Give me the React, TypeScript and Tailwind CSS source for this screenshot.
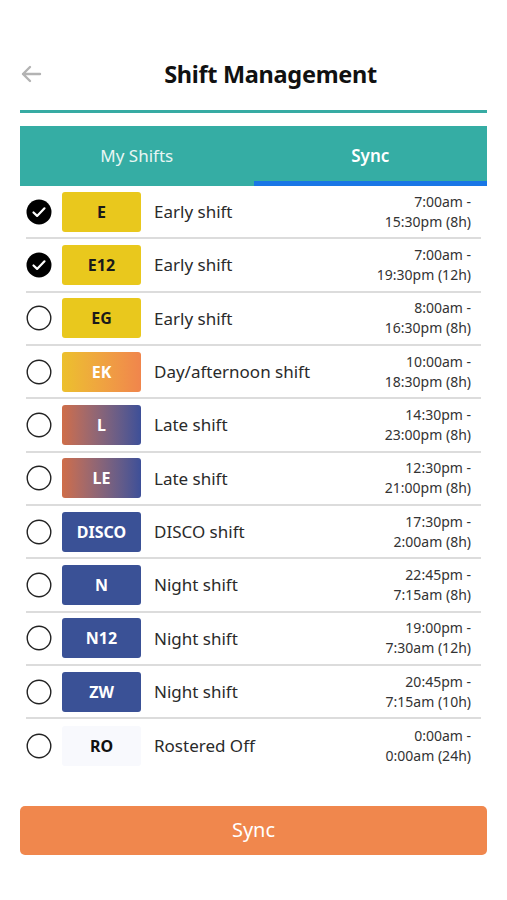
import React from 'react';

type Shift = {
  code: string;
  name: string;
  from: string;
  to: string;
  badge: string;
  text: string;
  checked?: boolean;
};

const shifts: Shift[] = [
  { code: 'E', name: 'Early shift', from: '7:00am -', to: '15:30pm (8h)', badge: 'bg-[#e9c81d]', text: 'text-[#1a1a1a]', checked: true },
  { code: 'E12', name: 'Early shift', from: '7:00am -', to: '19:30pm (12h)', badge: 'bg-[#e9c81d]', text: 'text-[#1a1a1a]', checked: true },
  { code: 'EG', name: 'Early shift', from: '8:00am -', to: '16:30pm (8h)', badge: 'bg-[#e9c81d]', text: 'text-[#1a1a1a]' },
  { code: 'EK', name: 'Day/afternoon shift', from: '10:00am -', to: '18:30pm (8h)', badge: 'bg-gradient-to-r from-[#ecc02c] to-[#f0854c]', text: 'text-white' },
  { code: 'L', name: 'Late shift', from: '14:30pm -', to: '23:00pm (8h)', badge: 'bg-gradient-to-r from-[#cf6d48] to-[#3d4f98]', text: 'text-white' },
  { code: 'LE', name: 'Late shift', from: '12:30pm -', to: '21:00pm (8h)', badge: 'bg-gradient-to-r from-[#cf6d48] to-[#3d4f98]', text: 'text-white' },
  { code: 'DISCO', name: 'DISCO shift', from: '17:30pm -', to: '2:00am (8h)', badge: 'bg-[#3a5196]', text: 'text-white' },
  { code: 'N', name: 'Night shift', from: '22:45pm -', to: '7:15am (8h)', badge: 'bg-[#3a5196]', text: 'text-white' },
  { code: 'N12', name: 'Night shift', from: '19:00pm -', to: '7:30am (12h)', badge: 'bg-[#3a5196]', text: 'text-white' },
  { code: 'ZW', name: 'Night shift', from: '20:45pm -', to: '7:15am (10h)', badge: 'bg-[#3a5196]', text: 'text-white' },
  { code: 'RO', name: 'Rostered Off', from: '0:00am -', to: '0:00am (24h)', badge: 'bg-[#f8f9fd]', text: 'text-[#111]' },
];

const Check = ({ on }: { on?: boolean }) =>
  on ? (
    <svg width="26" height="26" viewBox="0 0 26 26">
      <circle cx="13" cy="13" r="12.5" fill="#000" />
      <path d="M7.5 13.5l3.6 3.4 7.4-7.6" fill="none" stroke="#fff" strokeWidth="2.2" strokeLinecap="round" strokeLinejoin="round" />
    </svg>
  ) : (
    <svg width="26" height="26" viewBox="0 0 26 26">
      <circle cx="13" cy="13" r="11.8" fill="none" stroke="#222" strokeWidth="1.4" />
    </svg>
  );

export default function App() {
  return (
    <div className="w-[507px] h-[900px] bg-white font-['Noto_Sans',sans-serif] px-5">
      <div className="relative h-[110px] flex items-start justify-center pt-[57px] pl-[34px]">
        <svg className="absolute left-0 top-[64px]" width="22" height="20" viewBox="0 0 22 20">
          <path d="M20 10H3M10 3L3 10l7 7" fill="none" stroke="#b3b3b3" strokeWidth="2.4" strokeLinecap="round" strokeLinejoin="round" />
        </svg>
        <h1 className="text-[23.5px] font-bold text-[#111] leading-[34px] tracking-[-0.3px]">Shift Management</h1>
      </div>
      <div className="h-[3px] bg-[#37aba3]" />
      <div className="mt-[13px] h-[60px] bg-[#35ada4] flex text-white text-[17px]">
        <div className="flex-1 flex items-center justify-center text-[#e8f6f4]">My Shifts</div>
        <div className="flex-1 flex items-center justify-center font-semibold border-b-[5px] border-[#1976e6] pt-[5px]">Sync</div>
      </div>
      <div className="pl-[6px] pr-[6px]">
        {shifts.map((s, i) => (
          <div
            key={s.code}
            className={`h-[53.35px] flex items-center ${i < shifts.length - 1 ? 'border-b-2 border-[#dcdcdc]' : ''}`}
          >
            <Check on={s.checked} />
            <div className={`ml-[10px] w-[79px] h-[40px] rounded-[3px] flex items-center justify-center font-bold text-[16px] ${s.badge} ${s.text}`}>
              {s.code}
            </div>
            <div className="ml-[13px] flex-1 text-[17px] text-[#2a2a2a]">{s.name}</div>
            <div className="text-right text-[14px] leading-[20px] text-[#333] pr-[10px]">
              <div>{s.from}</div>
              <div>{s.to}</div>
            </div>
          </div>
        ))}
      </div>
      <button className="mt-[33px] w-full h-[49px] rounded-[5px] bg-[#f0874d] text-white text-[20px] flex items-center justify-center">
        Sync
      </button>
    </div>
  );
}
